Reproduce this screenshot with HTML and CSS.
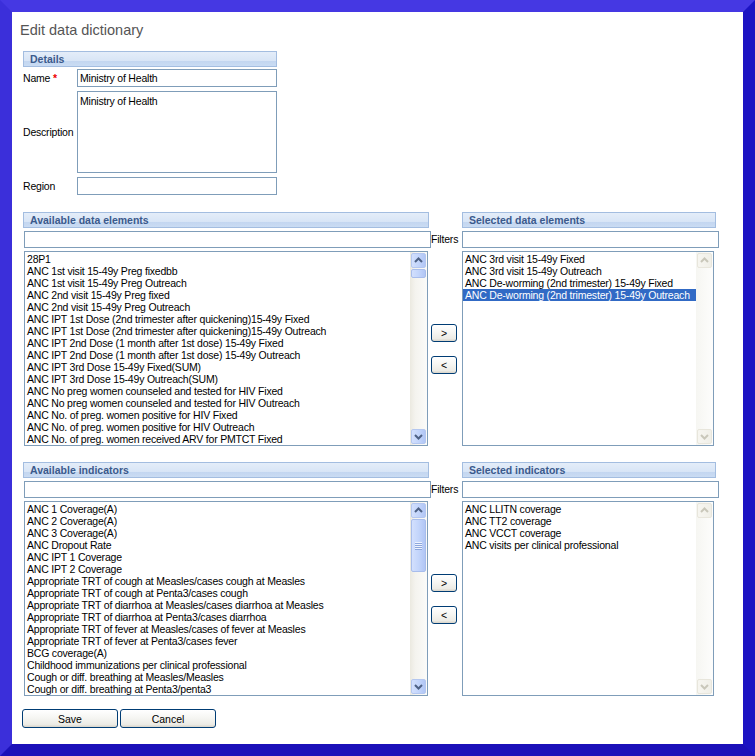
FILE: index.html
```html
<!DOCTYPE html>
<html>
<head>
<meta charset="utf-8">
<title>Edit data dictionary</title>
<link rel="stylesheet" href="styles.css">
</head>
<body>
<div class="frame">
  <div class="page">
    <h1 class="title">Edit data dictionary</h1>
    <div class="main">
      <section class="details">
        <div class="hdr">Details</div>
        <div class="form">
          <label class="lbl">Name <span class="req">*</span></label>
          <input class="inp" type="text" value="Ministry of Health">
          <label class="lbl">Description</label>
          <textarea class="inp ta">Ministry of Health</textarea>
          <label class="lbl">Region</label>
          <input class="inp" type="text" value="">
        </div>
      </section>

      <section class="picker picker-first">
        <div class="hdr hdr-l">Available data elements</div>
        <input class="inp filter-l" type="text" value="">
        <div class="list list-l">
          <div class="items">
            <div class="item">28P1</div>
            <div class="item">ANC 1st visit 15-49y Preg fixedbb</div>
            <div class="item">ANC 1st visit 15-49y Preg Outreach</div>
            <div class="item">ANC 2nd visit 15-49y Preg fixed</div>
            <div class="item">ANC 2nd visit 15-49y Preg Outreach</div>
            <div class="item">ANC IPT 1st Dose (2nd trimester after quickening)15-49y Fixed</div>
            <div class="item">ANC IPT 1st Dose (2nd trimester after quickening)15-49y Outreach</div>
            <div class="item">ANC IPT 2nd Dose (1 month after 1st dose) 15-49y Fixed</div>
            <div class="item">ANC IPT 2nd Dose (1 month after 1st dose) 15-49y Outreach</div>
            <div class="item">ANC IPT 3rd Dose 15-49y Fixed(SUM)</div>
            <div class="item">ANC IPT 3rd Dose 15-49y Outreach(SUM)</div>
            <div class="item">ANC No preg women counseled and tested for HIV Fixed</div>
            <div class="item">ANC No preg women counseled and tested for HIV Outreach</div>
            <div class="item">ANC No. of preg. women positive for HIV Fixed</div>
            <div class="item">ANC No. of preg. women positive for HIV Outreach</div>
            <div class="item">ANC No. of preg. women received ARV for PMTCT Fixed</div>
          </div>
          <div class="sb">
            <div class="sb-btn"><svg width="13" height="13" viewBox="0 0 13 13"><polyline points="3,8 6.5,4.5 10,8" fill="none" stroke="#4d6185" stroke-width="2"/></svg></div>
            <div class="sb-thumb sb-thumb-small"></div>
            <div class="sb-track"></div>
            <div class="sb-btn"><svg width="13" height="13" viewBox="0 0 13 13"><polyline points="3,5 6.5,8.5 10,5" fill="none" stroke="#4d6185" stroke-width="2"/></svg></div>
          </div>
        </div>
        <div class="filters-lbl">Filters</div>
        <div class="movers">
          <button class="xpbtn mv">&gt;</button>
          <button class="xpbtn mv">&lt;</button>
        </div>
        <div class="hdr hdr-r">Selected data elements</div>
        <input class="inp filter-r" type="text" value="">
        <div class="list list-r">
          <div class="items">
            <div class="item">ANC 3rd visit 15-49y Fixed</div>
            <div class="item">ANC 3rd visit 15-49y Outreach</div>
            <div class="item">ANC De-worming (2nd trimester) 15-49y Fixed</div>
            <div class="item sel">ANC De-worming (2nd trimester) 15-49y Outreach</div>
          </div>
          <div class="sb sb-off">
            <div class="sb-btn"><svg width="13" height="13" viewBox="0 0 13 13"><polyline points="3,8 6.5,4.5 10,8" fill="none" stroke="#c9c7ba" stroke-width="2"/></svg></div>
            <div class="sb-track"></div>
            <div class="sb-btn"><svg width="13" height="13" viewBox="0 0 13 13"><polyline points="3,5 6.5,8.5 10,5" fill="none" stroke="#c9c7ba" stroke-width="2"/></svg></div>
          </div>
        </div>
      </section>

      <section class="picker picker-second">
        <div class="hdr hdr-l">Available indicators</div>
        <input class="inp filter-l" type="text" value="">
        <div class="list list-l">
          <div class="items">
            <div class="item">ANC 1 Coverage(A)</div>
            <div class="item">ANC 2 Coverage(A)</div>
            <div class="item">ANC 3 Coverage(A)</div>
            <div class="item">ANC Dropout Rate</div>
            <div class="item">ANC IPT 1 Coverage</div>
            <div class="item">ANC IPT 2 Coverage</div>
            <div class="item">Appropriate TRT of cough at Measles/cases cough at Measles</div>
            <div class="item">Appropriate TRT of cough at Penta3/cases cough</div>
            <div class="item">Appropriate TRT of diarrhoa at Measles/cases diarrhoa at Measles</div>
            <div class="item">Appropriate TRT of diarrhoa at Penta3/cases diarrhoa</div>
            <div class="item">Appropriate TRT of fever at Measles/cases of fever at Measles</div>
            <div class="item">Appropriate TRT of fever at Penta3/cases fever</div>
            <div class="item">BCG coverage(A)</div>
            <div class="item">Childhood immunizations per clinical professional</div>
            <div class="item">Cough or diff. breathing at Measles/Measles</div>
            <div class="item">Cough or diff. breathing at Penta3/penta3</div>
          </div>
          <div class="sb">
            <div class="sb-btn"><svg width="13" height="13" viewBox="0 0 13 13"><polyline points="3,8 6.5,4.5 10,8" fill="none" stroke="#4d6185" stroke-width="2"/></svg></div>
            <div class="sb-thumb sb-thumb-big"><span class="grip"></span></div>
            <div class="sb-track"></div>
            <div class="sb-btn"><svg width="13" height="13" viewBox="0 0 13 13"><polyline points="3,5 6.5,8.5 10,5" fill="none" stroke="#4d6185" stroke-width="2"/></svg></div>
          </div>
        </div>
        <div class="filters-lbl">Filters</div>
        <div class="movers">
          <button class="xpbtn mv">&gt;</button>
          <button class="xpbtn mv">&lt;</button>
        </div>
        <div class="hdr hdr-r">Selected indicators</div>
        <input class="inp filter-r" type="text" value="">
        <div class="list list-r">
          <div class="items">
            <div class="item">ANC LLITN coverage</div>
            <div class="item">ANC TT2 coverage</div>
            <div class="item">ANC VCCT coverage</div>
            <div class="item">ANC visits per clinical professional</div>
          </div>
          <div class="sb sb-off">
            <div class="sb-btn"><svg width="13" height="13" viewBox="0 0 13 13"><polyline points="3,8 6.5,4.5 10,8" fill="none" stroke="#c9c7ba" stroke-width="2"/></svg></div>
            <div class="sb-track"></div>
            <div class="sb-btn"><svg width="13" height="13" viewBox="0 0 13 13"><polyline points="3,5 6.5,8.5 10,5" fill="none" stroke="#c9c7ba" stroke-width="2"/></svg></div>
          </div>
        </div>
      </section>

      <div class="actions">
        <button class="xpbtn act">Save</button>
        <button class="xpbtn act">Cancel</button>
      </div>
    </div>
  </div>
</div>
</body>
</html>
```

FILE: styles.css
```css
html, body {
  margin: 0;
  padding: 0;
  background: #fff;
}

body {
  font-family: "Liberation Sans", Arial, sans-serif;
  font-size: 10.5px;
  color: #000;
}

.frame {
  box-sizing: border-box;
  width: 755px;
  height: 756px;
  border-style: solid;
  border-width: 12px;
  border-color: #4538e3 #1c13c3 #1b10b9 #3b2fda;
  background: #fff;
  overflow: hidden;
}

.page {
  padding: 10px 0 0 8px;
}

.title {
  margin: 0 0 13px;
  font-size: 14.5px;
  font-weight: normal;
  line-height: 16px;
  color: #555;
}

.main {
  padding-left: 3px;
}

.hdr {
  box-sizing: border-box;
  height: 16px;
  border: 1px solid #a3bde0;
  background: linear-gradient(#e4edf9 0%, #d8e5f6 62%, #c3d6f0 66%, #cadcf3 100%);
  color: #3b5a8c;
  font-weight: bold;
  padding-left: 6px;
  line-height: 14px;
  white-space: nowrap;
}

.details {
  width: 254px;
}

.form {
  display: grid;
  grid-template-columns: 54px 200px;
  row-gap: 4px;
  margin-top: 2px;
  align-items: center;
}

.lbl {
  letter-spacing: -0.2px;
}

.req {
  color: #e00;
  font-weight: bold;
}

.inp {
  box-sizing: border-box;
  display: block;
  width: 100%;
  height: 18px;
  margin: 0;
  border: 1px solid #7f9db9;
  border-radius: 0;
  padding: 0 2px;
  font-family: "Liberation Sans", Arial, sans-serif;
  font-size: 10.5px;
  letter-spacing: -0.2px;
  color: #000;
  background: #fff;
  outline: none;
}

.ta {
  height: 82px;
  padding: 3px 2px;
  line-height: 12px;
  resize: none;
  overflow: hidden;
}

.picker {
  display: grid;
  grid-template-columns: 408px 31px 257px;
  grid-template-rows: 16px 17px 195px;
  row-gap: 3px;
}

.picker-first {
  margin-top: 17px;
}

.picker-second {
  margin-top: 16px;
}

.hdr-l {
  grid-column: 1;
  grid-row: 1;
  width: 406px;
}

.filter-l {
  grid-column: 1;
  grid-row: 2;
  width: 407px;
  height: 17px;
  margin-left: 1px;
}

.list-l {
  grid-column: 1;
  grid-row: 3;
  width: 404px;
  margin-left: 1px;
}

.filters-lbl {
  grid-column: 2;
  grid-row: 2;
  line-height: 17px;
  letter-spacing: -0.2px;
}

.movers {
  grid-column: 2;
  grid-row: 3;
  display: flex;
  flex-direction: column;
  justify-content: center;
  gap: 14px;
  padding-top: 1px;
}

.hdr-r {
  grid-column: 3;
  grid-row: 1;
  width: 254px;
}

.filter-r {
  grid-column: 3;
  grid-row: 2;
  width: 257px;
  height: 17px;
}

.list-r {
  grid-column: 3;
  grid-row: 3;
  width: 252px;
}

.list {
  box-sizing: border-box;
  height: 195px;
  border: 1px solid #7f9db9;
  display: flex;
  background: #fff;
}

.items {
  flex: 1;
  min-width: 0;
  overflow: hidden;
  padding-top: 1px;
}

.item {
  height: 12px;
  line-height: 12px;
  padding-left: 2px;
  white-space: nowrap;
  letter-spacing: -0.2px;
}

.item.sel {
  background: #316ac5;
  color: #fff;
}

.sb {
  width: 17px;
  display: flex;
  flex-direction: column;
  background: linear-gradient(to right, #ebe9e0 0%, #f4f3ee 30%, #fbfbf9 100%);
}

.sb-track {
  flex: 1;
}

.sb-btn {
  box-sizing: border-box;
  width: 15px;
  height: 15px;
  margin: 1px;
  border: 1px solid #b4c7f0;
  border-radius: 2px;
  background: linear-gradient(to right, #d3e0fd 0%, #c3d5fb 50%, #b1c6f5 100%);
  display: flex;
  align-items: center;
  justify-content: center;
}

.sb-btn svg {
  display: block;
}

.sb-thumb {
  box-sizing: border-box;
  width: 15px;
  margin: 0 1px;
  border: 1px solid #a8bdec;
  border-radius: 2px;
  background: linear-gradient(to right, #d3e0fd 0%, #c3d5fb 50%, #b1c6f5 100%);
  display: flex;
  align-items: center;
  justify-content: center;
}

.sb-thumb-small {
  height: 9px;
}

.sb-thumb-big {
  height: 53px;
}

.grip {
  display: block;
  width: 7px;
  height: 8px;
  background: repeating-linear-gradient(#eef3fe 0, #eef3fe 1px, #8ca6dc 1px, #8ca6dc 2px);
}

.sb-off {
  background: linear-gradient(to right, #f6f6f2 0%, #fdfdfc 100%);
}

.sb-off .sb-btn {
  border-color: #e8e6dc;
  background: linear-gradient(to right, #f7f6f1 0%, #f0efe8 100%);
}

.xpbtn {
  box-sizing: border-box;
  margin: 0;
  padding: 0;
  border: 1px solid #003c74;
  border-radius: 3px;
  background: linear-gradient(#ffffff 0%, #f6f6f3 45%, #ecebe5 85%, #d8d4c9 100%);
  font-family: "Liberation Sans", Arial, sans-serif;
  font-size: 10.5px;
  color: #000;
  line-height: 16px;
  text-align: center;
}

.mv {
  width: 26px;
  height: 18px;
}

.actions {
  display: flex;
  gap: 2px;
  margin: 13px 0 0 -1px;
}

.act {
  width: 96px;
  height: 19px;
}
```
